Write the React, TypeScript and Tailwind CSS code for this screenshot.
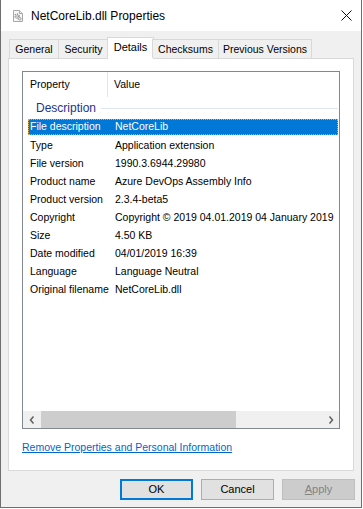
import React from 'react'

const ui = { fontFamily: '"Liberation Sans", Arial, sans-serif' }

const rows: [string, string][] = [
  ['Type', 'Application extension'],
  ['File version', '1990.3.6944.29980'],
  ['Product name', 'Azure DevOps Assembly Info'],
  ['Product version', '2.3.4-beta5'],
  ['Copyright', 'Copyright © 2019 04.01.2019 04 January 2019'],
  ['Size', '4.50 KB'],
  ['Date modified', '04/01/2019 16:39'],
  ['Language', 'Language Neutral'],
  ['Original filename', 'NetCoreLib.dll'],
]

const tabs = [
  { label: 'General', w: 'w-[50px]' },
  { label: 'Security', w: 'w-[51px]' },
  { label: 'Details', w: 'w-[47px]', active: true },
  { label: 'Checksums', w: 'w-[67px]' },
  { label: 'Previous Versions', w: 'w-[94px]' },
]

function FileIcon() {
  return (
    <svg width="12" height="12" viewBox="0 0 12 12">
      <path d="M1.5 0.5 H7.5 L10.5 3.5 V11.5 H1.5 Z" fill="#f7f7f7" stroke="#a8a8a8" />
      <path d="M7.5 0.5 V3.5 H10.5" fill="#e6e6e6" stroke="#a8a8a8" />
      <circle cx="5" cy="6" r="2" fill="none" stroke="#8a8a8a" strokeWidth="1.4" strokeDasharray="1.2 0.9" />
      <circle cx="5" cy="6" r="0.8" fill="#8a8a8a" />
      <circle cx="7.8" cy="8.8" r="1.3" fill="none" stroke="#9a9a9a" strokeWidth="1" />
    </svg>
  )
}

function Chevron({ dir }: { dir: 'left' | 'right' }) {
  return (
    <svg width="6" height="8" viewBox="0 0 6 8">
      <polyline
        points={dir === 'left' ? '4.5,0.5 1.5,4 4.5,7.5' : '1.5,0.5 4.5,4 1.5,7.5'}
        fill="none"
        stroke="#606060"
        strokeWidth="1.5"
      />
    </svg>
  )
}

export default function App() {
  return (
    <div className="w-[363px] h-[509px] bg-white" style={ui}>
      <div className="w-[362px] h-[508px] flex flex-col border-x border-b border-[#6f6f6f] bg-[#f0f0f0]">
        {/* Title bar */}
        <div className="h-[31px] bg-white flex items-center shrink-0">
          <div className="ml-[11px] flex">
            <FileIcon />
          </div>
          <span className="ml-[7px] text-[12px] text-black">NetCoreLib.dll Properties</span>
          <div className="ml-auto mr-[9px] flex">
            <svg width="11" height="11" viewBox="0 0 11 11">
              <path d="M0.5 0.5 L10.5 10.5 M10.5 0.5 L0.5 10.5" stroke="#111" strokeWidth="1" />
            </svg>
          </div>
        </div>

        {/* Tabs */}
        <div className="flex items-end pl-[8px] mt-[5px] h-[22px] relative z-10 shrink-0">
          {tabs.map((t) =>
            t.active ? (
              <div
                key={t.label}
                className={`${t.w} h-[22px] -mb-[1px] -ml-[2px] -mr-[1px] bg-white border border-b-0 border-[#d9d9d9] flex items-center justify-center text-[11px] leading-none text-black pb-[2px]`}
              >
                {t.label}
              </div>
            ) : (
              <div
                key={t.label}
                className={`${t.w} h-[19px] -ml-px first:ml-0 bg-[#f0f0f0] border border-b-0 border-[#d9d9d9] flex items-center justify-center text-[10.5px] leading-none text-black`}
              >
                {t.label}
              </div>
            )
          )}
        </div>

        {/* Panel */}
        <div className="mx-[7px] h-[413px] bg-white border border-[#d9d9d9] flex flex-col px-[13px] pt-[12px] shrink-0">
          <div className="h-[358px] border border-[#828790] flex flex-col text-[10.5px] text-black overflow-hidden">
            {/* Header */}
            <div className="h-[25px] flex items-center shrink-0">
              <div className="w-[85px] h-full flex items-center pl-[7px] border-r border-[#e5e5e5]">Property</div>
              <div className="pl-[6px]">Value</div>
            </div>

            {/* Group */}
            <div className="h-[22px] flex items-center pl-[13px] pr-[1px] shrink-0">
              <span className="text-[12px] text-[#1e3287]">Description</span>
              <div className="flex-1 h-px bg-[#dfe5f1] ml-[5px]" />
            </div>

            {/* Selected row */}
            <div className="h-[18px] pl-[5px] pr-[1px] shrink-0">
              <div className="h-[16px] bg-[#0078d7] text-white flex items-center outline-1 outline-dotted outline-[#e8a84a] -outline-offset-1">
                <span className="w-[87px] pl-[2px] whitespace-nowrap">File description</span>
                <span className="whitespace-nowrap">NetCoreLib</span>
              </div>
            </div>

            {rows.map(([k, v]) => (
              <div key={k} className="h-[18px] pl-[5px] flex items-center shrink-0 whitespace-nowrap">
                <span className="w-[87px] shrink-0 pl-[2px]">{k}</span>
                <span>{v}</span>
              </div>
            ))}

            <div className="flex-1" />

            {/* Horizontal scrollbar */}
            <div className="h-[17px] flex bg-[#f0f0f0] shrink-0">
              <div className="w-[18px] flex items-center justify-center">
                <Chevron dir="left" />
              </div>
              <div className="w-[195px] bg-[#cdcdcd]" />
              <div className="flex-1" />
              <div className="w-[17px] flex items-center justify-center">
                <Chevron dir="right" />
              </div>
            </div>
          </div>

          <div className="mt-[11px] text-[10.5px] leading-[14px]">
            <span className="text-[#0066cc] underline">Remove Properties and Personal Information</span>
          </div>
        </div>

        {/* Buttons */}
        <div className="flex justify-end gap-[8px] pt-[8px] pr-[6px]">
          <button className="w-[73px] h-[21px] bg-[#e1e1e1] border-2 border-[#0078d7] text-[11px] text-black flex items-center justify-center">
            OK
          </button>
          <button className="w-[73px] h-[21px] bg-[#e1e1e1] border border-[#adadad] text-[11px] text-black flex items-center justify-center">
            Cancel
          </button>
          <button className="w-[73px] h-[21px] bg-[#cccccc] border border-[#bfbfbf] text-[11px] text-[#838383] flex items-center justify-center">
            <span>
              <span className="underline">A</span>pply
            </span>
          </button>
        </div>
      </div>
    </div>
  )
}
